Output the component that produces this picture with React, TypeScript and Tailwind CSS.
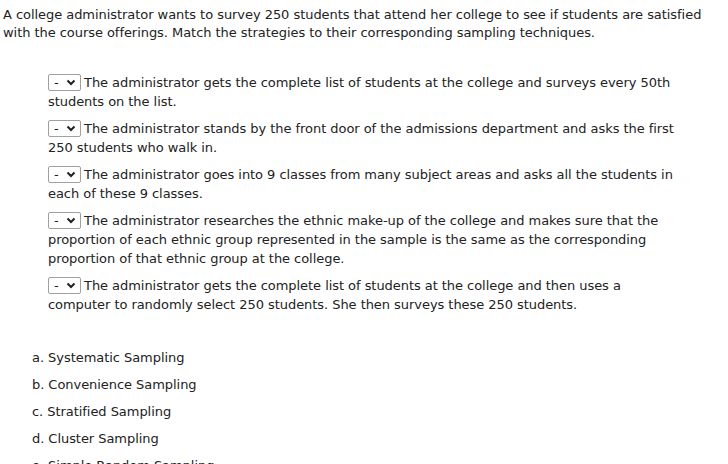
import React from "react";

const items: string[][] = [
  ["The administrator gets the complete list of students at the college and surveys every 50th", "students on the list."],
  ["The administrator stands by the front door of the admissions department and asks the first", "250 students who walk in."],
  ["The administrator goes into 9 classes from many subject areas and asks all the students in", "each of these 9 classes."],
  [
    "The administrator researches the ethnic make-up of the college and makes sure that the",
    "proportion of each ethnic group represented in the sample is the same as the corresponding",
    "proportion of that ethnic group at the college.",
  ],
  ["The administrator gets the complete list of students at the college and then uses a", "computer to randomly select 250 students. She then surveys these 250 students."],
];

const options = [
  "a. Systematic Sampling",
  "b. Convenience Sampling",
  "c. Stratified Sampling",
  "d. Cluster Sampling",
  "e. Simple Random Sampling",
];

function SelectBox() {
  return (
    <span className="inline-flex items-center align-middle h-[17px] w-[33px] border border-[#a0a0a0] rounded-[2px] bg-white mr-[3px] relative -top-[1px]">
      <span className="pl-[5px] text-[13px] leading-none">-</span>
      <svg className="ml-[7px]" width="10" height="7" viewBox="0 0 10 7">
        <path d="M1.5 1.5 L5 5 L8.5 1.5" fill="none" stroke="#222" strokeWidth="2" />
      </svg>
    </span>
  );
}

export default function App() {
  return (
    <div className="bg-white text-[#222] text-[13px] tracking-[-0.05px] leading-[18px] w-[728px] min-h-[464px]" style={{ fontFamily: '"DejaVu Sans", sans-serif' }}>
      <p className="pl-[3px] pt-[6px]">
        A college administrator wants to survey 250 students that attend her college to see if students are satisfied
        <br />
        with the course offerings. Match the strategies to their corresponding sampling techniques.
      </p>
      <div className="pl-[48px] pt-[31px] flex flex-col gap-[8px]">
        {items.map((lines, i) => (
          <div key={i} className="leading-[19px]">
            <SelectBox />
            {lines.map((l, j) => (
              <React.Fragment key={j}>
                {j > 0 && <br />}
                {l}
              </React.Fragment>
            ))}
          </div>
        ))}
      </div>
      <ul className="pl-[32px] pt-[35px] flex flex-col gap-[9px]">
        {options.map((o) => (
          <li key={o} className="leading-[18px]">{o}</li>
        ))}
      </ul>
    </div>
  );
}
